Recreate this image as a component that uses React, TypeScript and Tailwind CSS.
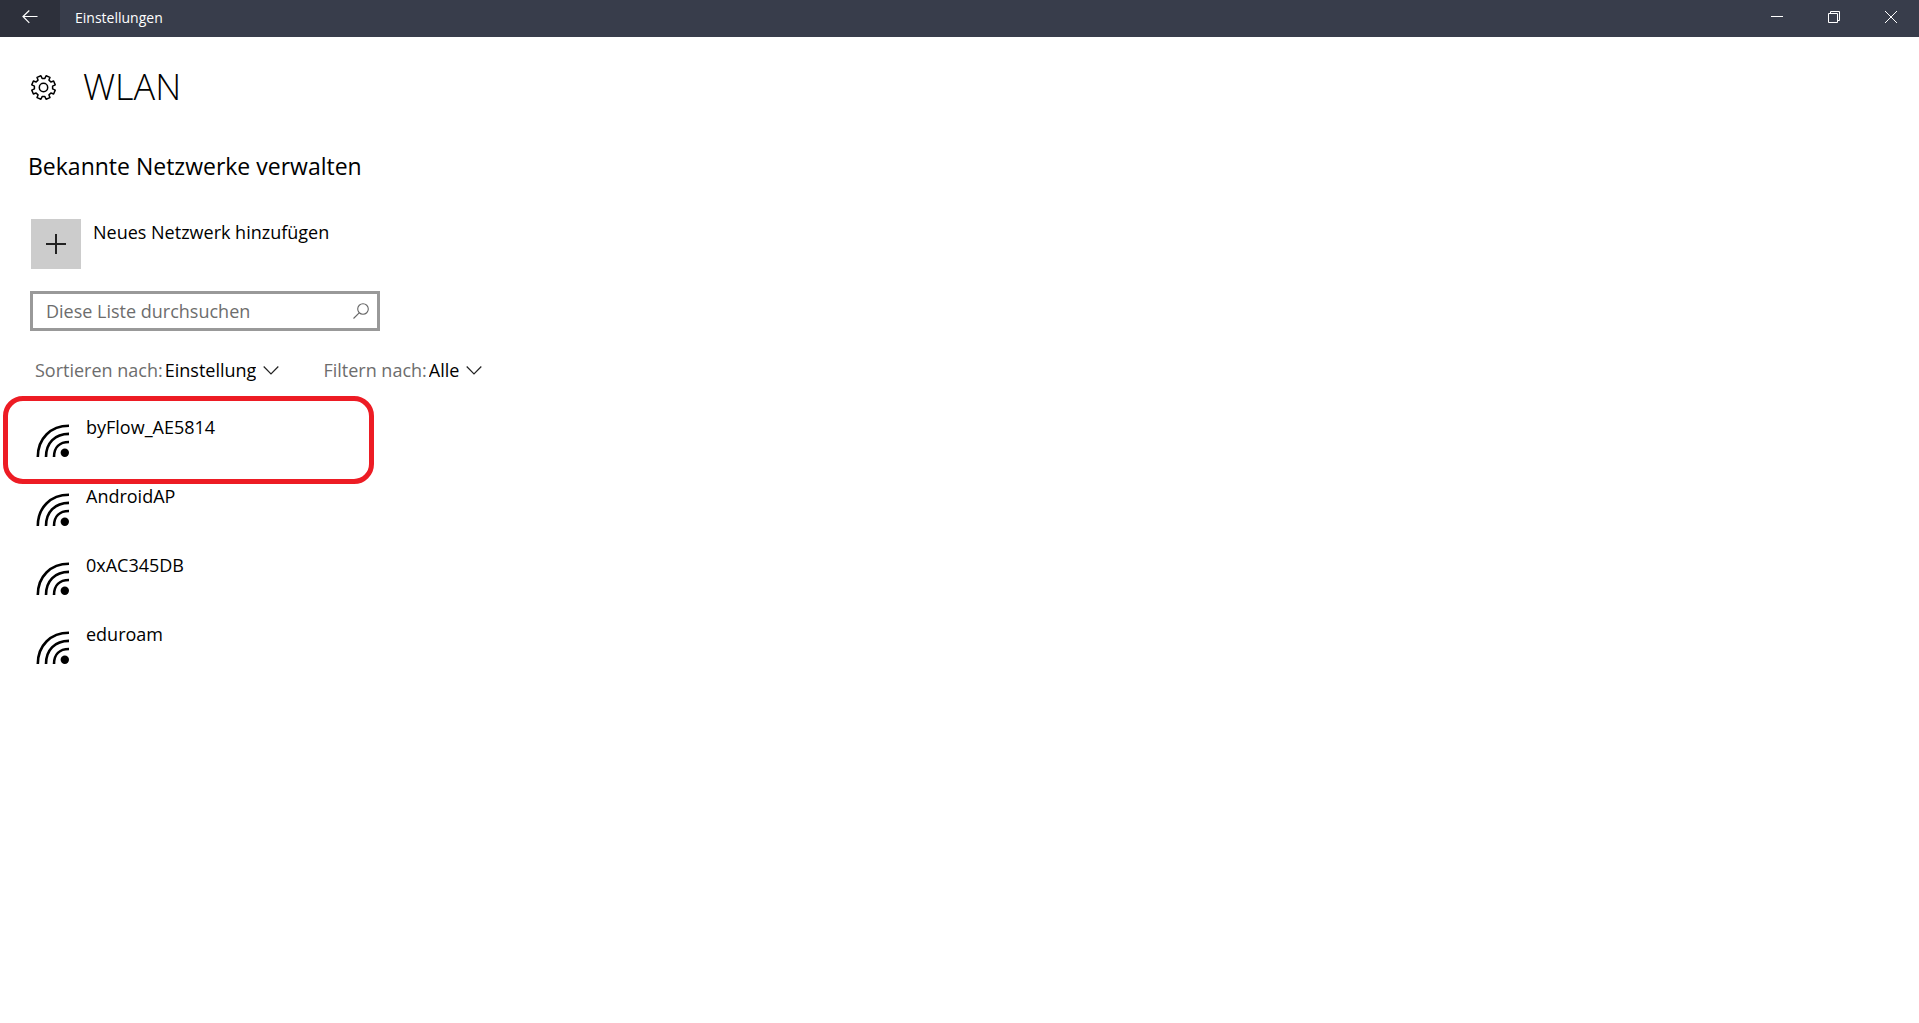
import { useState } from "react";

const networks=["byFlow_AE5814","AndroidAP","0xAC345DB","eduroam"];
const marked="byFlow_AE5814";

// gear outline: 8 teeth, computed once
const gear=(()=>{
  const pts:string[]=[];
  for(let i=0;i<8;i++){
    const a=i*45+22.5;
    for(const [d,r] of [[-14,9.2],[-10,12],[10,12],[14,9.2]]){
      const t=((a+d)*Math.PI)/180;
      pts.push(`${(12.5+r*Math.cos(t)).toFixed(2)} ${(12.5+r*Math.sin(t)).toFixed(2)}`);
    }
  }
  return "M"+pts.join("L")+"Z";
})();

function GearIcon(){
  return (
    <svg width="26" height="26" viewBox="0 0 26 26" fill="none" stroke="#000" strokeWidth="1.5" strokeLinejoin="round" aria-hidden="true">
      <path d={gear}/>
      <circle cx="12.5" cy="12.5" r="4.2"/>
    </svg>
  );
}

function WifiIcon(){
  return (
    <svg width="33" height="33" viewBox="0 0 33 33" fill="none" stroke="#000" strokeWidth="2.6" className="shrink-0" aria-hidden="true">
      <path d="M1.8 33C1.8 14.5 14.5 1.8 33 1.8"/>
      <path d="M10 33C10 19 19 9.9 33 9.9"/>
      <path d="M18 33C18 23.5 23.5 18 33 18"/>
      <circle cx="28.8" cy="28.8" r="4.2" fill="#000" stroke="none"/>
    </svg>
  );
}

function Picker({id,label,options}:{id:string;label:string;options:string[]}){
  const [value,setValue]=useState(options[0]);
  return (
    <div className="flex items-center">
      <label htmlFor={id} className="text-[#6d6d6d] mr-[2px]">{label}</label>
      <div className="relative flex items-center">
        <select id={id} value={value} onChange={e=>setValue(e.target.value)} className="appearance-none field-sizing-content bg-transparent pr-[23px] text-black cursor-pointer">
          {options.map(o=><option key={o}>{o}</option>)}
        </select>
        <svg width="16" height="10" viewBox="0 0 16 10" fill="none" stroke="#222" strokeWidth="1.2" className="absolute right-0 pointer-events-none" aria-hidden="true">
          <path d="M.7 1.5L8 8.8 15.3 1.5"/>
        </svg>
      </div>
    </div>
  );
}

export default function App(){
  const [query,setQuery]=useState("");
  const list=networks.filter(n=>n.toLowerCase().includes(query.toLowerCase()));
  const winBtn="w-[57px] flex items-center justify-center";

  return (
    <div className="min-h-screen bg-white text-black text-[18px] leading-6 font-['Open_Sans',sans-serif]">
      <header className="flex h-[37px] bg-[#383d4b] text-white">
        <button aria-label="Zurück" className="w-[60px] bg-[#2d303b] flex items-center justify-center pb-1">
          <svg width="16" height="14" viewBox="0 0 16 14" fill="none" stroke="#fff" strokeWidth="1.2" aria-hidden="true">
            <path d="M15.5 6.5H1M7.3.5L1 6.5l6.3 6.3"/>
          </svg>
        </button>
        <div className="flex-1 px-[15px] text-[14px] leading-9">Einstellungen</div>
        <div className="flex pb-1">
          <button aria-label="Minimieren" className={winBtn}>
            <svg width="12" height="12" viewBox="0 0 12 12" aria-hidden="true"><path d="M0 5.5h12" stroke="#fff"/></svg>
          </button>
          <button aria-label="Verkleinern" className={winBtn}>
            <svg width="12" height="12" viewBox="0 0 12 12" fill="none" stroke="#fff" aria-hidden="true"><path d="M.5 2.5h9v9h-9zM2.5 2.5v-2h9v9h-2"/></svg>
          </button>
          <button aria-label="Schließen" className={winBtn}>
            <svg width="12" height="12" viewBox="0 0 12 12" stroke="#fff" aria-hidden="true"><path d="M0 0L12 12M12 0L0 12"/></svg>
          </button>
        </div>
      </header>

      <main className="px-7 pt-[27px]">
        <div className="pl-[3px] flex items-center gap-[26px]">
          <GearIcon/>
          <h1 className="text-[36px] leading-[46px] pb-[2px] font-light">WLAN</h1>
        </div>
        <h2 className="mt-[38px] text-[23px] leading-8">Bekannte Netzwerke verwalten</h2>

        <button className="mt-[37px] ml-[3px] flex items-start gap-3 text-left">
          <span className="size-[50px] bg-[#ccc] flex items-center justify-center">
            <svg width="20" height="20" viewBox="0 0 20 20" stroke="#222" strokeWidth="2" aria-hidden="true"><path d="M0 10h20M10 0v20"/></svg>
          </span>
          <span className="pt-px">Neues Netzwerk hinzufügen</span>
        </button>

        <div className="px-[2px]">
          <div className="mt-[22px] relative w-full max-w-[350px]">
            <input type="search" aria-label="Diese Liste durchsuchen" placeholder="Diese Liste durchsuchen" value={query} onChange={e=>setQuery(e.target.value)} className="block w-full h-10 border-[3px] border-[#999] pl-[13px] pr-9 placeholder:text-[#6d6d6d] focus:outline-none"/>
            <svg width="16" height="16" viewBox="0 0 16 16" fill="none" stroke="#666" strokeWidth="1.1" className="absolute right-[11px] top-3 pointer-events-none" aria-hidden="true">
              <circle cx="10" cy="6" r="5.3"/>
              <path d="M6.2 9.8L.5 15.5"/>
            </svg>
          </div>

          <div className="mt-[27px] px-[5px] flex flex-wrap gap-x-11">
            <Picker id="sort" label="Sortieren nach:" options={["Einstellung","Name"]}/>
            <Picker id="filter" label="Filtern nach:" options={["Alle","Privat"]}/>
          </div>

          <ul className="mt-6 w-full max-w-[350px]">
            {list.map(n=>(
              <li key={n} className="relative h-[69px] pl-[6px] pt-[9px] flex items-start gap-[17px]">
                <span className="pt-[9px]"><WifiIcon/></span>
                <span>{n}</span>
                {n===marked&&<span className="absolute -left-[27px] right-[6px] -top-[10px] -bottom-[9px] border-[5px] border-[#ed1c24] rounded-[20px] pointer-events-none"/>}
              </li>
            ))}
          </ul>
        </div>
      </main>
    </div>
  );
}
